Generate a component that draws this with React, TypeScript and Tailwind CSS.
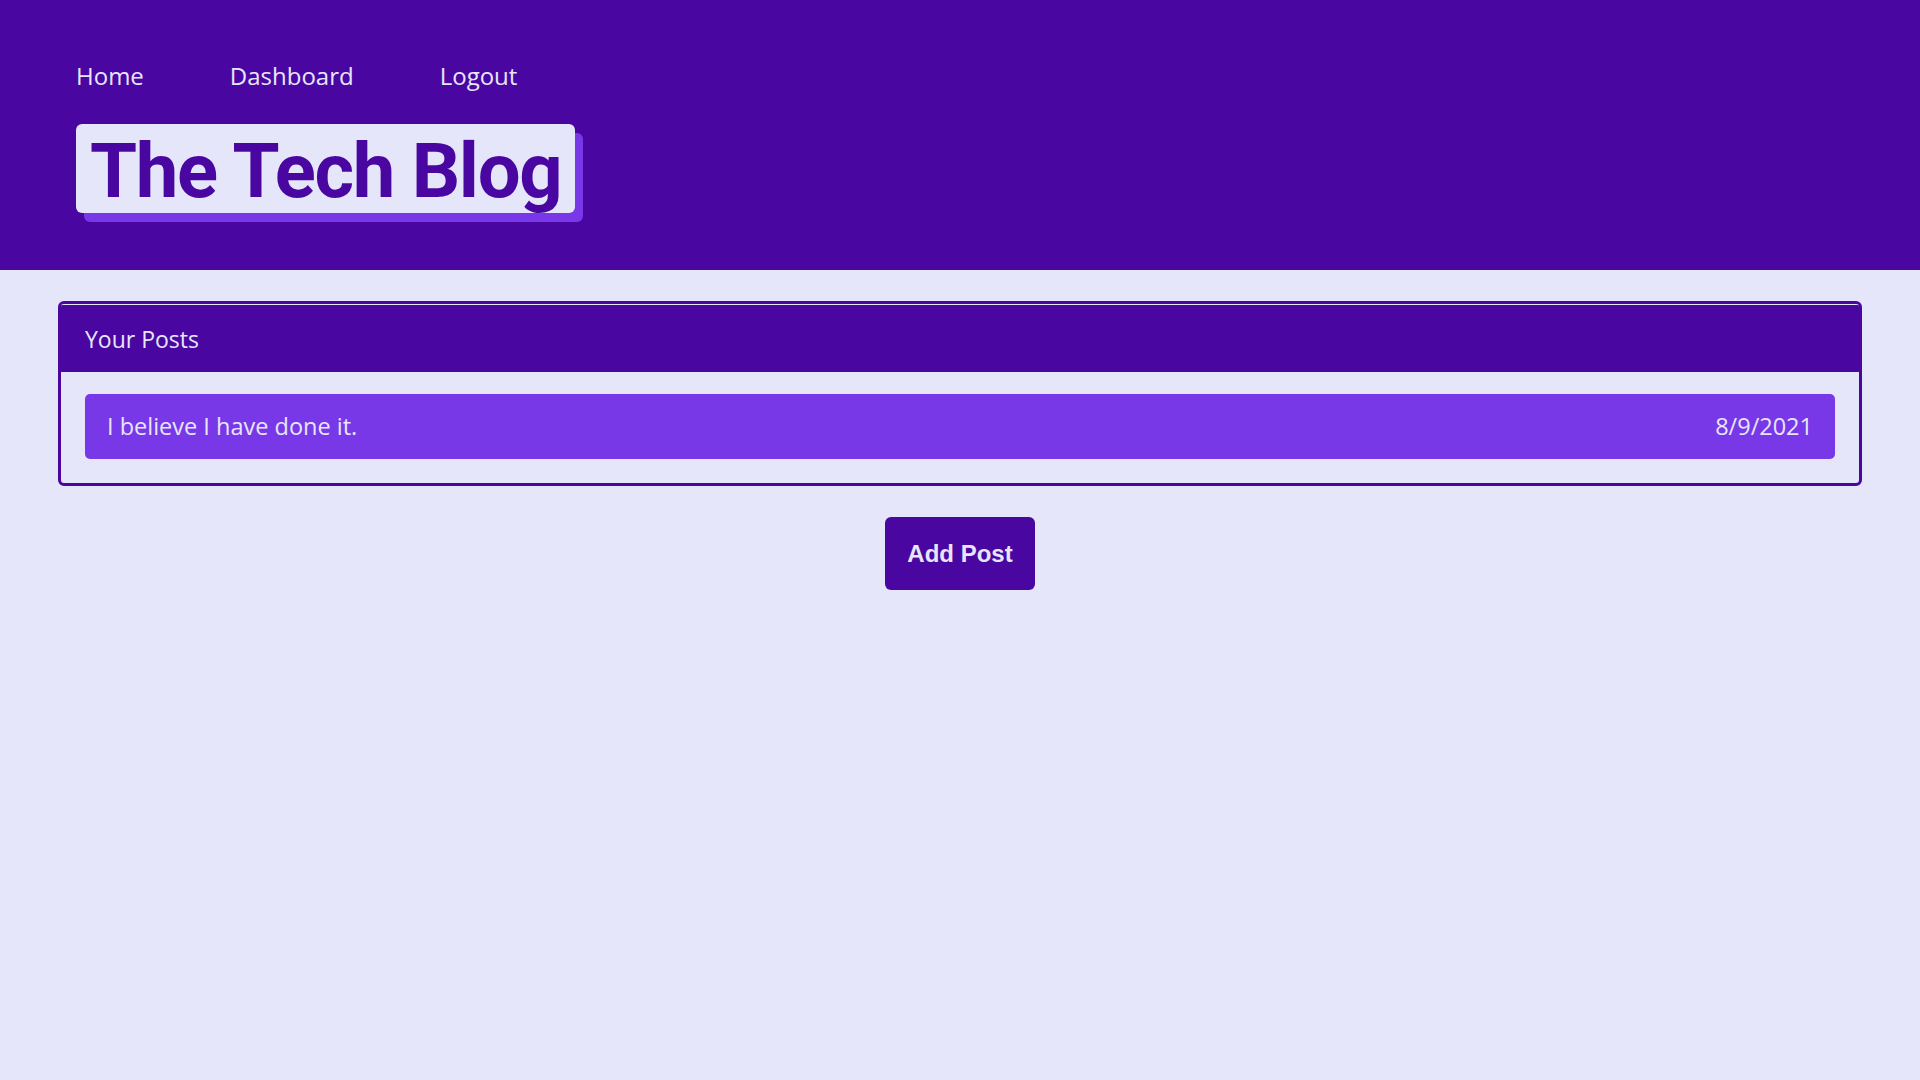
const POSTS = [
  {
    id: 1,
    title: 'I believe I have done it.',
    date: '8/9/2021',
  },
];

const NAV_LINKS = ['Home', 'Dashboard', 'Logout'];

export default function App() {
  return (
    <div
      className="min-h-screen bg-[#e6e6fa] text-[#e6e6fa]"
      style={{ fontFamily: '"Open Sans", "Noto Sans", sans-serif' }}
    >
      <header className="bg-[#4a06a0] px-[76px] pt-[58px] pb-[57px]">
        <nav className="flex gap-[86px] text-[24px] leading-[36px]">
          {NAV_LINKS.map((link) => (
            <a key={link} href="#">
              {link}
            </a>
          ))}
        </nav>

        <div className="mt-[30px] flex">
          <h1
            className="rounded-md bg-[#e6e6fa] pt-[9px] pr-[14px] pb-[4px] pl-[14px] text-[76px] font-bold leading-[76px] tracking-[-1.3px] text-[#4a06a0] shadow-[8px_9px_0_#7838e8]"
            style={{ fontFamily: 'Roboto, "Open Sans", sans-serif' }}
          >
            The Tech Blog
          </h1>
        </div>
      </header>

      <main className="px-[58px] pt-[31px]">
        <section className="overflow-hidden rounded-md border-[3px] border-[#4a06a0]">
          <div className="border-t border-[#e6e6fa] bg-[#4a06a0] px-[24px] pt-[16px] pb-[15px] text-[23px] leading-[36px]">
            Your Posts
          </div>

          <div className="flex flex-col gap-4 px-[24px] pt-[22px] pb-[24px]">
            {POSTS.map((post) => (
              <a
                key={post.id}
                href="#"
                className="flex h-[65px] items-center justify-between rounded-[5px] bg-[#7838e8] px-[22px] text-[23.5px]"
              >
                <span>{post.title}</span>
                <span>{post.date}</span>
              </a>
            ))}
          </div>
        </section>

        <div className="mt-[31px] flex justify-center">
          <button
            type="button"
            className="h-[73px] w-[150px] rounded-md bg-[#4a06a0] text-[24px] font-bold text-[#e6e6fa]"
            style={{ fontFamily: '"Liberation Sans", Arial, sans-serif' }}
          >
            Add Post
          </button>
        </div>
      </main>
    </div>
  );
}
